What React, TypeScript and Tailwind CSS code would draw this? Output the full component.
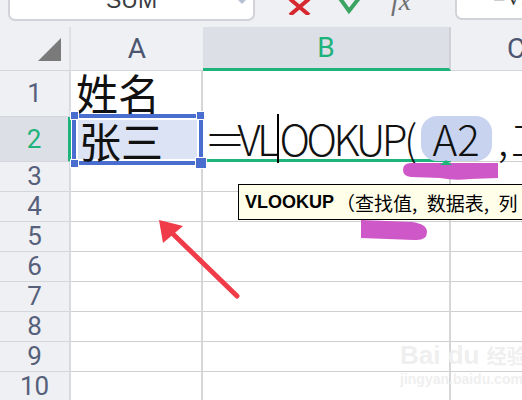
import * as React from 'react'

const rows = ['1', '2', '3', '4', '5', '6', '7', '8', '9', '10']

function TopBar() {
  return (
    <div className="flex h-[27px] items-start bg-[#eff0f4]">
      <div className="relative ml-[8px] flex h-[21px] w-[247px] justify-center overflow-hidden rounded-b-[7px] border-x-2 border-b-2 border-[#d2d3d8] bg-white">
        <span className="-mt-[11px] font-['Liberation_Sans',sans-serif] text-[23px] leading-none text-[#3a3d42]">SUM</span>
        <span className="absolute right-[7px] top-0 h-0 w-0 border-x-[4px] border-t-[4px] border-x-transparent border-t-[#b8c0d4]" />
      </div>
      <svg className="ml-[33px]" width="24" height="15" viewBox="0 0 24 15">
        <path d="M2 -1 L21 15 M21 -1 L2 15" stroke="#d6282f" strokeWidth="4" fill="none" />
      </svg>
      <svg className="ml-[26px]" width="27" height="15" viewBox="0 0 27 15">
        <path d="M1 -3 L11 11 L25 -7" stroke="#3ba462" strokeWidth="4" fill="none" />
      </svg>
      <span className="ml-[26px] -mt-[13px] font-['Liberation_Serif',serif] text-[28px] italic leading-none text-[#707070]">
        fx
      </span>
      <div className="ml-auto h-[20px] w-[67px] overflow-hidden rounded-bl-[7px] border-b-2 border-l-2 border-[#d2d3d8] bg-white pl-[36px]">
        <span className="-mt-[13px] block font-['Liberation_Serif',serif] text-[22px] leading-none text-[#333]">=VLO</span>
      </div>
    </div>
  )
}

function RowHead({ n }: { n: string }) {
  const active = n === '2'
  return (
    <div
      className={
        active
          ? "flex items-center justify-center border-b border-r-[3px] border-b-[#d5d6db] border-r-[#1db37a] bg-[#dcdfe6] font-['Roboto',sans-serif] text-[26px] text-[#1db37a]"
          : "flex items-center justify-center border-b border-r-2 border-b-[#d5d6db] border-r-[#d9dade] bg-[#eff0f4] font-['Roboto',sans-serif] text-[26px] text-[#56607a]"
      }
    >
      {n}
    </div>
  )
}

function Sheet() {
  return (
    <div className="grid grid-cols-[71px_132px_248px_130px] grid-rows-[44px_46px_45px_repeat(8,30px)] font-['Noto_Sans_CJK_SC','Noto_Sans',sans-serif]">
      {/* column headers */}
      <div className="flex items-end justify-end border-b border-r-2 border-b-[#d5d6db] border-r-[#dfe0e4] bg-[#eff0f4] pb-[9px] pr-[8px]">
        <svg width="23" height="23" viewBox="0 0 23 23">
          <path d="M23 0 L23 23 L0 23 Z" fill="#7a7a7a" />
        </svg>
      </div>
      <div className="flex items-center justify-center border-b border-[#d5d6db] bg-[#eff0f4] font-['Roboto',sans-serif] text-[28px] text-[#4c5670]">
        A
      </div>
      <div className="flex items-center justify-center border-b-[3px] border-r-2 border-b-[#1db37a] border-r-[#cfd1d7] bg-[#dcdfe6] font-['Roboto',sans-serif] text-[28px] text-[#1db37a]">
        B
      </div>
      <div className="flex items-center justify-center border-b border-[#d5d6db] bg-[#eff0f4] font-['Roboto',sans-serif] text-[28px] text-[#4c5670]">
        C
      </div>

      {/* row 1 */}
      <RowHead n="1" />
      <div className="flex items-center whitespace-nowrap border-r-2 border-[#d6d6d6] pb-[5px] pl-[5px] text-[42px] leading-none text-[#111]">
        姓名
      </div>
      <div />
      <div />

      {/* row 2 */}
      <RowHead n="2" />
      <div className="border-r-2 border-[#d6d6d6]" />
      <div className="relative z-10 flex items-center whitespace-nowrap border-b-[3px] border-[#1db37a] pl-[1px] text-[42px] font-light leading-none tracking-[-3.5px] text-[#111]">
        <span className="-mr-[5px] shrink-0">＝</span>
        <span className="shrink-0">VL</span>
        <span className="mx-[1px] inline-block h-[49px] w-[2px] shrink-0 bg-black" />
        <span className="shrink-0">OOKUP(</span>
        <span className="ml-[7px] flex h-[45px] w-[71px] shrink-0 items-center justify-center rounded-[16px] bg-[#c8d3ef] tracking-normal">
          A2
        </span>
        <span className="ml-[6px] shrink-0">,</span>
        <span className="ml-[6px] shrink-0">工</span>
      </div>
      <div className="border-b border-[#cfcfcf]" />

      {rows.slice(2).map((n) => (
        <React.Fragment key={n}>
          <RowHead n={n} />
          <div className="border-b border-r-2 border-b-[#cfcfcf] border-r-[#d6d6d6]" />
          <div className="border-b border-r-2 border-b-[#cfcfcf] border-r-[#d6d6d6]" />
          <div className="border-b border-[#cfcfcf]" />
        </React.Fragment>
      ))}
    </div>
  )
}

export default function App() {
  return (
    <div className="relative h-[400px] w-[522px] overflow-hidden bg-white">
      <TopBar />
      <Sheet />

      {/* selected cell A2 */}
      <div className="absolute left-[72px] top-[114px] z-20 h-[51px] w-[131px] border-[4px] border-[#4a6ed0] bg-white p-[2px]">
        <div className="flex h-full items-center bg-[#dce3f5] pl-[1px] font-['Noto_Sans_CJK_SC',sans-serif] text-[42px] leading-none text-[#111]">
          张三
        </div>
      </div>
      <span className="absolute left-[71px] top-[112px] z-30 h-[7px] w-[7px] bg-[#4a6ed0] ring-1 ring-white" />
      <span className="absolute left-[197px] top-[112px] z-30 h-[7px] w-[7px] bg-[#4a6ed0] ring-1 ring-white" />
      <span className="absolute left-[71px] top-[160px] z-30 h-[7px] w-[7px] bg-[#4a6ed0] ring-1 ring-white" />
      <span className="absolute left-[196px] top-[158px] z-30 h-[10px] w-[10px] bg-[#4a6ed0] ring-1 ring-white" />

      {/* function hint */}
      <div className="absolute left-[238px] top-[184px] z-30 flex h-[36px] w-[300px] items-center whitespace-nowrap border border-black bg-[#fffee9] pl-[6px] leading-none text-black">
        <span className="font-['Liberation_Sans',sans-serif] text-[18px] font-bold">VLOOKUP</span>
        <span className="ml-[2px] font-['Noto_Sans_CJK_SC',sans-serif] text-[19px]">（查找值,&ensp;数据表,&ensp;列</span>
      </div>

      {/* annotations */}
      <svg className="pointer-events-none absolute left-0 top-0 z-40" width="522" height="400" viewBox="0 0 522 400">
        <path d="M411 163 L498 163 L498 178 L470 179 Q455 181 440 178 L411 177 Q403 176 403 170 Q403 163 411 163 Z" fill="#cf58c9" />
        <path d="M440 165 L446 160 L452 165 Z" fill="#1db37a" />
        <path d="M361 220 L412 222 Q427 224 427 232 Q427 241 414 240 L361 238 Z" fill="#cf58c9" />
        <path d="M237 296 L172 233" stroke="#f03c48" strokeWidth="5" strokeLinecap="round" />
        <path d="M159 220 L183 226 L163 243 Z" fill="#f03c48" />
      </svg>

      <div className="pointer-events-none absolute left-[400px] top-[342px] z-40 flex flex-col items-start whitespace-nowrap font-['Liberation_Sans',sans-serif] leading-none text-[#efefef]">
        <span className="text-[26px] font-bold">
          Bai du <span className="font-['Noto_Sans_CJK_SC',sans-serif] text-[20px]">经验</span>
        </span>
        <span className="mt-[4px] text-[14px] font-bold">jingyan.baidu.com</span>
      </div>
    </div>
  )
}
